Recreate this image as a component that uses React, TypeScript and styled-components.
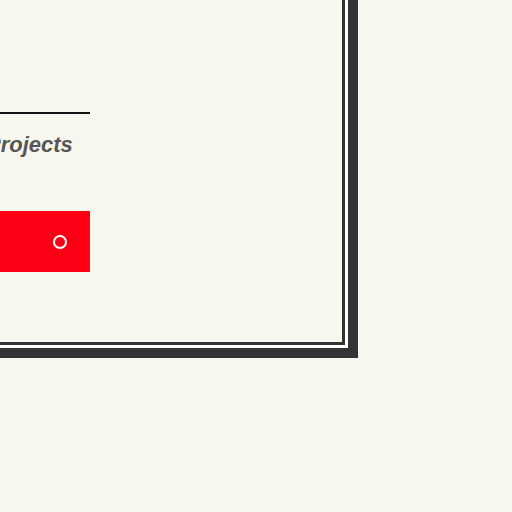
import React from "react";
import styled, { createGlobalStyle } from "styled-components";

const Global = createGlobalStyle`
  html, body {
    margin: 0;
    padding: 0;
    background: #f8f7ef;
    overflow: hidden;
  }
  body {
    width: 512px;
    height: 512px;
    font-family: "Liberation Sans", Arial, sans-serif;
  }
`;

const Page = styled.div`
  display: flex;
  align-items: flex-start;
  width: 512px;
  height: 512px;
`;

const Frame = styled.section`
  box-sizing: border-box;
  flex: 0 0 auto;
  width: 600px;
  height: 600px;
  margin: -242px 0 0 -242px;
  border: 10px solid #333333;
  padding: 3px;
  background: #ffffff;
  display: flex;
`;

const Inner = styled.div`
  box-sizing: border-box;
  flex: 1;
  border: 3px solid #333333;
  background: #f8f7ef;
  padding: 0 252px 70px 212px;
  display: flex;
  flex-direction: column;
  justify-content: flex-end;
`;

const Rule = styled.hr`
  margin: 0;
  border: 0;
  height: 2px;
  background: #111111;
`;

const Title = styled.h2`
  margin: 18px 0 0;
  font-size: 22px;
  line-height: 26px;
  font-weight: 700;
  font-style: italic;
  color: #555555;
  white-space: nowrap;
`;

const Button = styled.button`
  box-sizing: border-box;
  margin-top: 53px;
  height: 61px;
  border: 0;
  background: #fb0014;
  display: flex;
  align-items: center;
  justify-content: flex-end;
  padding: 0 23px 0 0;
  cursor: pointer;
`;

const Dot = styled.span`
  box-sizing: border-box;
  width: 14px;
  height: 14px;
  border-radius: 50%;
  border: 2px solid #ffffff;
`;

export default function App() {
  return (
    <>
      <Global />
      <Page>
        <Frame>
          <Inner>
            <Rule />
            <Title>Projects</Title>
            <Button aria-label="Open projects">
              <Dot />
            </Button>
          </Inner>
        </Frame>
      </Page>
    </>
  );
}
